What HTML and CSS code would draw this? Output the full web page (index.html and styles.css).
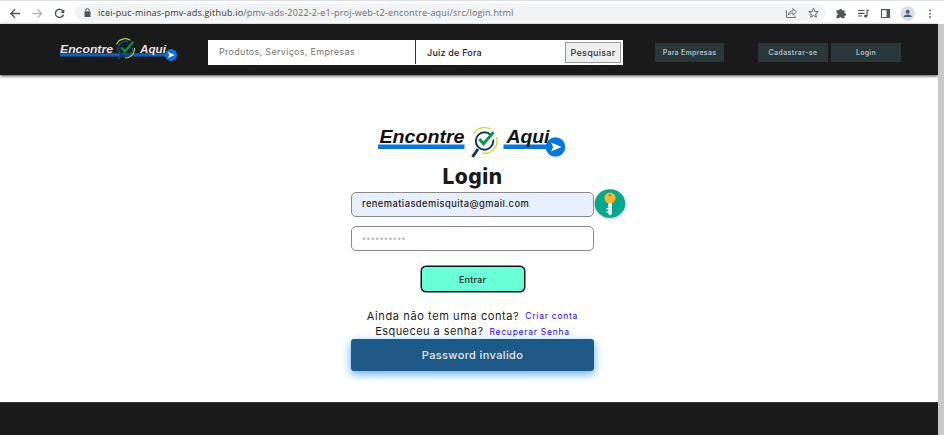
FILE: index.html
```html
<!DOCTYPE html>
<html lang="pt-BR">
<head>
<meta charset="utf-8">
<title>Encontre Aqui - Login</title>
<link rel="stylesheet" href="styles.css">
</head>
<body>
<div class="browser">
  <div class="tabstrip"></div>
  <div class="toolbar">
    <svg class="nav-icons" viewBox="0 0 75 24" fill="none" stroke-width="1.3">
      <path stroke="#505459" d="M20 12.5H11M15 8.300l-4.200 4.200 4.200 4.200"/>
      <path stroke="#b3b5b8" d="M32.500 12.500h9M37.500 8.300l4.200 4.200-4.200 4.200"/>
      <path stroke="#505459" stroke-width="1.400" d="M63 10.200a4.100 4.100 0 1 0 .5 3.300"/>
      <path fill="#505459" d="M64.300 8v4h-4z"/>
    </svg>
    <div class="address">
      <svg class="lock" viewBox="0 0 7 9"><path fill="#505459" d="M.5 3.500h6V9h-6z"/><path fill="none" stroke="#505459" d="M1.800 4V2.300a1.700 1.700 0 0 1 3.400 0V4"/></svg>
      <span class="url"><b>icei-puc-minas-pmv-ads.github.io</b>/pmv-ads-2022-2-e1-proj-web-t2-encontre-aqui/src/login.html</span>
      <svg class="address-icons" viewBox="0 0 34 14" fill="none" stroke="#606468" stroke-width=".9">
        <path d="M1.500 4.500v7h8.500V9.500M3.300 9.200c.4-3 2.200-4.300 4.700-4.400V2.500l3.500 3.500L8 9.200V7c-2 0-3.500.6-4.700 2.200z"/>
        <path stroke-width="1" d="M28.500 2.300l1.300 3.200 3.400.2-2.600 2.200.8 3.400-2.900-1.800-2.900 1.800.8-3.400-2.600-2.200 3.400-.2z"/>
      </svg>
    </div>
    <svg class="tool-icons" viewBox="826 0 118 24">
      <path fill="#54585d" d="M836.500 9.300h2.500a1.500 1.500 0 0 1 3 0h2.500v2.700a1.500 1.500 0 0 1 0 3v2.300h-2.700a1.400 1.400 0 0 0-2.700 0h-2.600v-2.700a1.300 1.300 0 0 0 0-2.600z"/>
      <path fill="none" stroke="#54585d" stroke-width="1.200" d="M858 9.500h6.500M858 12.300h6.500M858 15h4M867 15V9.400h2"/>
      <circle cx="865.700" cy="15" r="1.600" fill="#54585d"/>
      <path fill="none" stroke="#54585d" stroke-width="1.200" d="M881.500 8.700h8v7.800h-8z"/><path fill="#54585d" d="M886.500 8.500h3.500v8h-3.500z"/>
      <circle cx="907.700" cy="12.600" r="7.300" fill="#d9dee6"/>
      <circle cx="907.700" cy="10.700" r="2" fill="#4b5c78"/><path fill="#4b5c78" d="M903.500 16c0-3.500 8.400-3.500 8.400 0z"/>
      <g fill="#54585d"><circle cx="930" cy="9.500" r=".9"/><circle cx="930" cy="12.800" r=".9"/><circle cx="930" cy="16" r=".9"/></g>
    </svg>
  </div>
</div>
<div class="viewport">
  <div class="page">
    <header class="header">
      <svg class="brand" viewBox="0 0 120 30">
        <path fill="#0b62bd" d="M0 18.300h113v3.200H0z"/>
        <text class="logo-text light" x="0" y="17.600" font-size="11.800" textLength="53" lengthAdjust="spacingAndGlyphs">Encontre</text>
        <text class="logo-text light" x="80" y="17.600" font-size="11.800" textLength="26" lengthAdjust="spacingAndGlyphs">Aqui</text>
        <path fill="none" stroke="#184064" stroke-width="2" d="M72.500 12a7.300 7.300 0 1 1-4-5M61 20l-3 4"/>
        <path fill="none" stroke="#b5cb3c" stroke-width="1.100" d="M56.500 9.500a9.500 9.500 0 0 1 14-4.200M74.500 13a9.300 9.300 0 0 1-9.500 10"/>
        <path fill="none" stroke="#079449" stroke-width="2.200" d="M61.300 12.500l3.500 4 8.500-9.700"/>
        <circle cx="111" cy="20" r="6.100" fill="#0b75db"/><path fill="#fff" d="M108 17.100l6.800 2.900-6.800 2.900 1.400-2.900z"/>
      </svg>
      <div class="search">
        <span class="search-term">Produtos, Serviços, Empresas</span>
        <span class="search-city">Juiz de Fora</span>
        <button class="search-button">Pesquisar</button>
      </div>
      <nav class="menu">
        <a class="menu-link business"><span>Para Empresas</span></a>
        <a class="menu-link register"><span>Cadastrar-se</span></a>
        <a class="menu-link"><span>Login</span></a>
      </nav>
    </header>
    <main class="login">
      <svg class="login-logo" viewBox="0 0 208 34">
        <path fill="#0876d9" d="M9 19.500h86.500V24H9zM134.500 19.500h50V24h-50z"/>
        <text class="logo-text" x="10.500" y="18.400" font-size="18" textLength="85" lengthAdjust="spacingAndGlyphs">Encontre</text>
        <text class="logo-text" x="137.500" y="18.400" font-size="18" textLength="43" lengthAdjust="spacingAndGlyphs">Aqui</text>
        <circle cx="115.500" cy="16" r="8.700" fill="none" stroke="#15365f" stroke-width="2"/>
        <path fill="none" stroke="#15365f" stroke-width="3" d="M109 24l-5.500 8"/>
        <path fill="none" stroke="#c5e348" stroke-width="1.500" d="M104.500 9a12.500 12.500 0 0 1 17-5M127.500 12a12.500 12.500 0 0 1-14.500 16"/>
        <path fill="none" stroke="#fff" stroke-width="5" d="M119.500 16l7-8"/>
        <path fill="none" stroke="#06964c" stroke-width="2.900" d="M110.300 14l4.200 4.800 10-11.500"/>
        <circle cx="186.500" cy="22" r="9.800" fill="#0876df"/><path fill="#fff" d="M182 17.500l10.500 4.500-10.500 4.500 2.200-4.500z"/>
        <path stroke="#f4f4f4" d="M0 32.500h102M107 32.500h101"/>
      </svg>
      <h1 class="title"><span>Login</span></h1>
      <div class="field filled"><span>renematiasdemisquita@gmail.com</span>
        <svg class="key" viewBox="0 0 32 32">
          <ellipse cx="16" cy="15.500" rx="15.300" ry="14.300" fill="#05a78d"/>
          <path fill="#fff" d="M14.300 13h3.500v13l-1.700 1.500-1.800-1.500zM12.500 20h2v1.500h-2zM12.500 23h2v1.500h-2z"/>
          <circle cx="16" cy="10" r="5.600" fill="#ffb62e"/><circle cx="16" cy="7.300" r="1.300" fill="#b87922"/>
        </svg>
      </div>
      <div class="field password"><span>••••••••••</span></div>
      <button class="submit"><span>Entrar</span></button>
      <p class="hint"><span class="ask-account">Ainda não tem uma conta?</span><a class="link-account">Criar conta</a></p>
      <p class="hint"><span class="ask-password">Esqueceu a senha?</span><a class="link-password">Recuperar Senha</a></p>
      <div class="alert"><span>Password invalido</span></div>
    </main>
    <footer class="footer"></footer>
  </div>
  <div class="scrollbar"></div>
</div>
</body>
</html>
```
FILE: styles.css
```css
* { box-sizing: border-box; }
body {
  margin: 0;
  height: 435px;
  overflow: hidden;
  background: #fff;
  font-family: Inter, "Open Sans", sans-serif;
  color: #1a1a1a;
}
svg { display: block; flex: none; }
span, a { white-space: nowrap; }
.browser { height: 24px; background: #fff; }
.tabstrip { width: 944px; height: 1px; background: #dfe1e8; }
.toolbar { display: flex; align-items: center; height: 23px; }
.nav-icons { width: 75px; height: 24px; }
.address {
  display: flex;
  align-items: center;
  width: 751px;
  height: 17px;
  padding-left: 9px;
  border-radius: 9px;
  background: #f1f3f4;
}
.lock { width: 7px; height: 9px; }
.url {
  width: 687px;
  padding-left: 7px;
  font: 9px "Open Sans", sans-serif;
  letter-spacing: 0.205px;
  color: #686c70;
}
.url b { font-weight: 400; color: #303336; }
.address-icons { width: 34px; height: 14px; margin-left: 7px; }
.tool-icons { width: 118px; height: 24px; }
.viewport { display: flex; height: 411px; }
.page { display: flex; flex-direction: column; width: 938px; }
.scrollbar { width: 6px; background: #c8c8c8; }
.header {
  display: flex;
  align-items: center;
  flex: none;
  height: 51px;
  padding: 0 37px 1px 60px;
  background: #1a1a1a;
  box-shadow: 0 1px 3px #444;
}
.brand { width: 120px; height: 30px; margin-top: 2px; }
.logo-text { font-family: "Liberation Sans", Arial, sans-serif; font-weight: 700; font-style: italic; fill: #111; }
.light { fill: #eee1e1; }
.search {
  display: flex;
  align-items: center;
  width: 415px;
  height: 25px;
  margin: 6px 0 0 28px;
  padding-right: 2px;
  background: #fff;
  font-size: 9px;
}
.search-term { width: 208px; padding-left: 11px; line-height: 24px; border-right: 1px solid #333; color: #747474; letter-spacing: 0.3px; }
.search-city { flex: 1; padding-left: 11px; font-weight: 500; letter-spacing: 0.2px; }
.search-button {
  width: 56px;
  height: 21px;
  padding: 0;
  border: 1px solid #999;
  background: #efefef;
  font: 500 9px Inter, sans-serif;
  letter-spacing: 0.28px;
  color: #333;
}
.menu { display: flex; gap: 3px; margin: 6px 0 0 32px; }
.menu-link {
  display: flex;
  align-items: center;
  justify-content: center;
  width: 70px;
  height: 19px;
  background: #29373b;
  color: #a9bfc9;
  font-size: 7px;
  font-weight: 600;
  letter-spacing: 0.25px;
}
.business { width: 69px; margin-right: 31px; }
.register { letter-spacing: 0.4px; }
.login {
  display: flex;
  flex-direction: column;
  align-items: center;
  height: 327px;
  padding: 50px 0 0 7px;
}
.login-logo { width: 208px; height: 34px; }
.title { margin: 3px 0 1.4px; height: 28px; font-size: 21px; line-height: 30px; font-weight: 800; letter-spacing: 0.5px; }
.field {
  position: relative;
  display: flex;
  align-items: center;
  width: 243px;
  height: 25px;
  flex: none;
  padding: 0 0 1px 10px;
  border: 1px solid #8a8a8a;
  border-radius: 5px;
  font-size: 9.3px;
  font-weight: 500;
  letter-spacing: 0.46px;
}
.filled { margin-top: 0.5px; background: #e8f0fe; }
.key { position: absolute; left: 242px; top: -5px; width: 32px; height: 32px; filter: drop-shadow(0 1px 1px #bbb); }
.password { margin-top: 9px; color: #bbb; font-size: 8px; letter-spacing: 0.1px; }
.submit {
  flex: none;
  width: 104px;
  height: 26px;
  margin: 15.4px 0 15.6px;
  padding: 0;
  border: 1.5px solid #111;
  border-radius: 5px;
  background: #69ffd7;
  box-shadow: 0 0 0 0.5px #111;
  font: 500 9px Inter, sans-serif;
  letter-spacing: 0.2px;
  color: #1a1a1a;
}
.hint { display: flex; gap: 6px; align-items: center; height: 15.500px; margin: 0; font-size: 11px; }
.hint a { color: #2008e8; font-size: 8.500px; padding-top: 1px; letter-spacing: 0.75px; }
.ask-account { letter-spacing: 0.6px; }
.ask-password { letter-spacing: 0.45px; }
.alert {
  flex: none;
  display: flex;
  align-items: center;
  justify-content: center;
  width: 243px;
  height: 32px;
  border-radius: 3px;
  background: #1f5987;
  color: #e8e8e8;
  font-size: 11px;
  font-weight: 500;
  letter-spacing: 0.37px;
  box-shadow: 0 3px 10px #58acf5;
}
.footer { flex: 1; background: #1a1a1a; border-top: 1px solid #333; }
```
